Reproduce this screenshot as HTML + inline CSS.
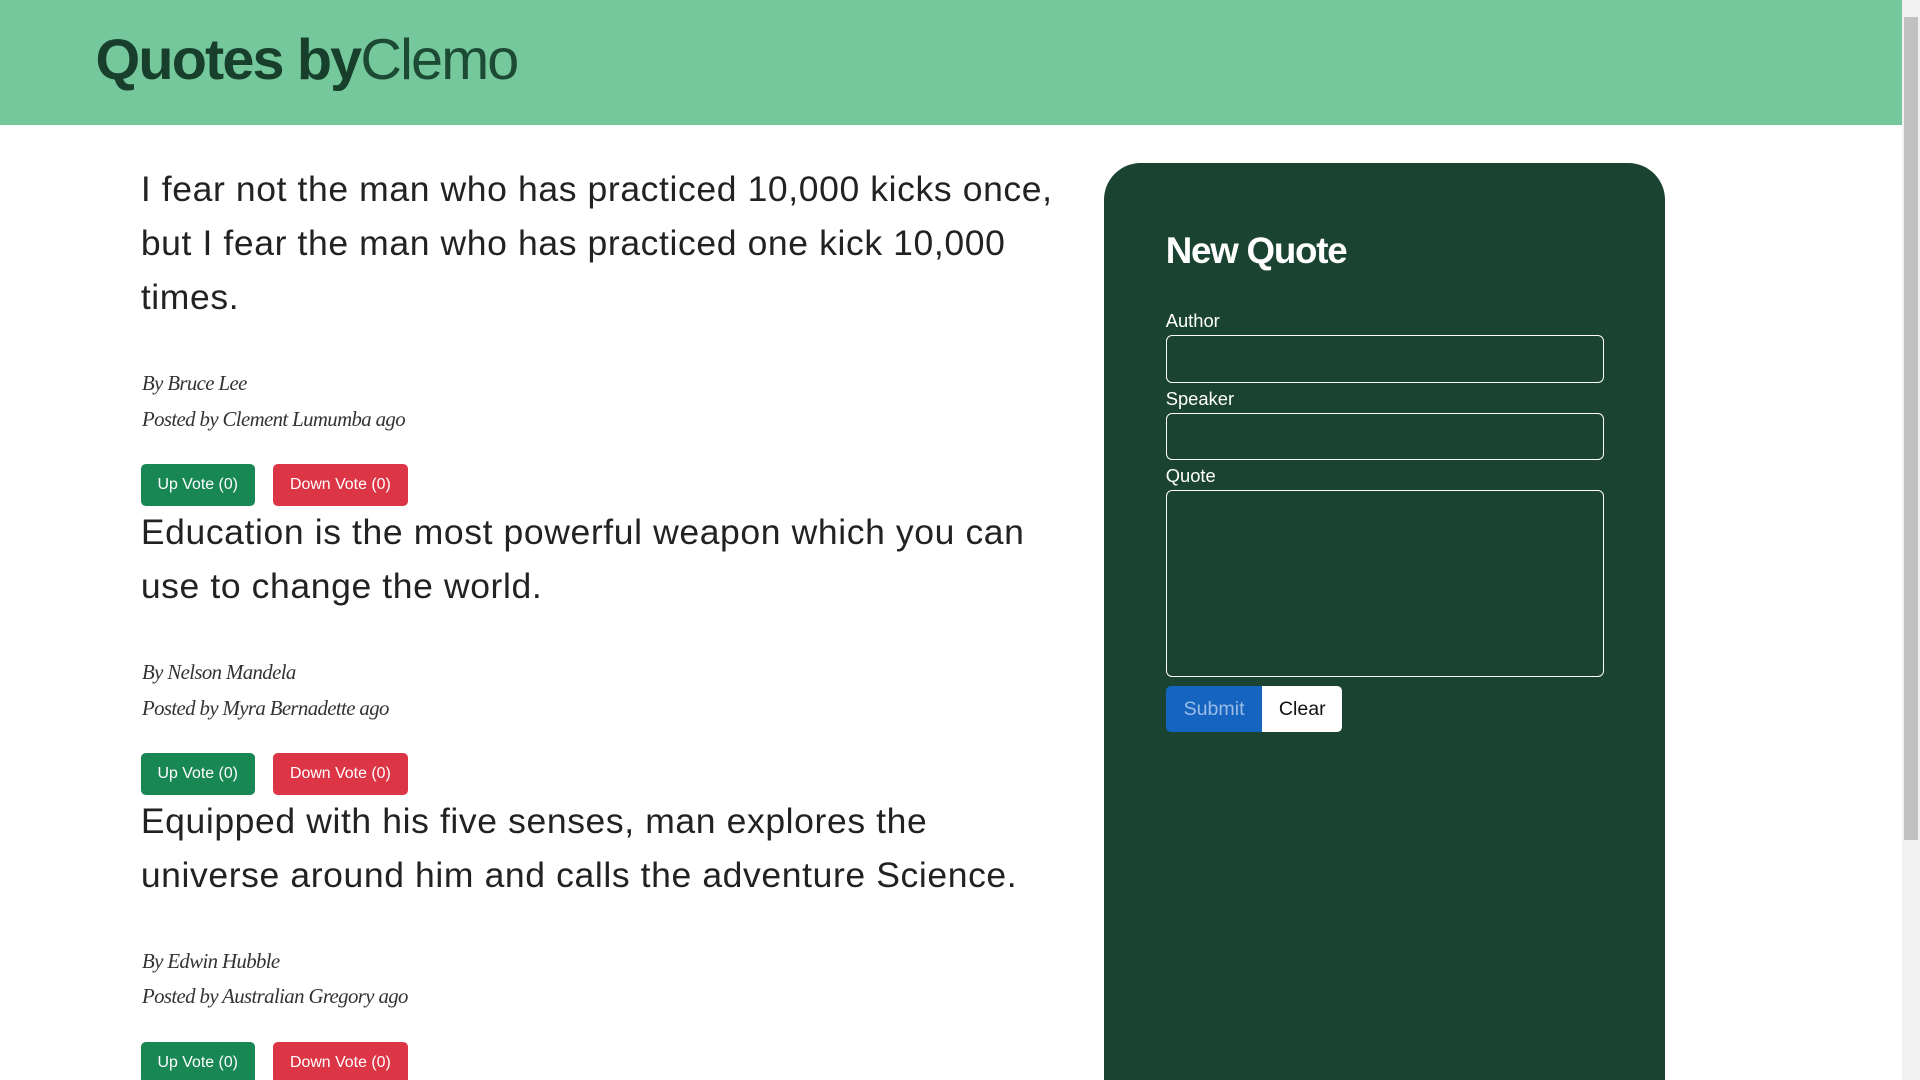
<!DOCTYPE html>
<html><head><meta charset="utf-8"><style>
html{zoom:1.22449;overflow:hidden}
body{margin:0;width:1568px;height:882px;overflow:hidden;background:#fff;font-family:"Liberation Sans",sans-serif;position:relative}
.hdr{position:absolute;left:0;top:0;width:1553px;height:102px;background:#75c89c}
.hdr h1{position:absolute;left:78px;top:20px;margin:0;font-size:47px;letter-spacing:-1.5px;color:#173f2c;font-weight:bold;line-height:60px}
.hdr h1 span{font-weight:normal;color:#1d4a34}
.sb{position:absolute;left:1553px;top:0;width:15px;height:882px;background:#f1f1f1}
.sb div{position:absolute;left:2px;top:14px;width:11px;height:672px;background:#c1c1c1}
.q{position:absolute;left:115px;width:760px;font-size:29px;line-height:44px;color:#222;letter-spacing:.5px}
.a{position:absolute;left:116px;font-family:"Liberation Serif",serif;font-style:italic;font-size:17px;color:#333;letter-spacing:-.5px}
.b{position:absolute;height:34px;border-radius:4px;color:#fff;font-size:13px;line-height:34px;text-align:center}
.up{left:115px;width:93px;background:#198754}
.dn{left:223px;width:110px;background:#dc3545}
.panel{position:absolute;left:902px;top:133px;width:458px;height:760px;background:#1b4332;border-radius:30px 30px 0 0}
.panel *{position:absolute}
.t{left:50px;top:55px;color:#fff;font-size:30px;font-weight:bold;letter-spacing:-1px}
.l{left:50px;color:#fff;font-size:15px}
.in{left:50px;width:356px;border:1px solid #fff;border-radius:5px}
</style></head><body>
<div class="hdr"><h1>Quotes by<span>Clemo</span></h1></div>
<div class="sb"><div></div></div>
<div class="q" style="top:133px">I fear not the man who has practiced 10,000 kicks once, but I fear the man who has practiced one kick 10,000 times.</div>
<div class="a" style="top:303px">By Bruce Lee</div>
<div class="a" style="top:332px">Posted by Clement Lumumba ago</div>
<div class="b up" style="top:379px">Up Vote (0)</div><div class="b dn" style="top:379px">Down Vote (0)</div>
<div class="q" style="top:413px">Education is the most powerful weapon which you can use to change the world.</div>
<div class="a" style="top:539px">By Nelson Mandela</div>
<div class="a" style="top:568px">Posted by Myra Bernadette ago</div>
<div class="b up" style="top:615px">Up Vote (0)</div><div class="b dn" style="top:615px">Down Vote (0)</div>
<div class="q" style="top:649px">Equipped with his five senses, man explores the universe around him and calls the adventure Science.</div>
<div class="a" style="top:775px">By Edwin Hubble</div>
<div class="a" style="top:804px">Posted by Australian Gregory ago</div>
<div class="b up" style="top:851px">Up Vote (0)</div><div class="b dn" style="top:851px">Down Vote (0)</div>
<div class="panel">
<div class="t">New Quote</div>
<div class="l" style="top:120px">Author</div>
<div class="in" style="top:141px;height:37px"></div>
<div class="l" style="top:184px">Speaker</div>
<div class="in" style="top:204px;height:37px"></div>
<div class="l" style="top:247px">Quote</div>
<div class="in" style="top:267px;height:151px"></div>
<div style="left:50px;top:427px;width:79px;height:38px;background:#1565c0;border-radius:4px 0 0 4px;color:#9bbbe8;font-size:16px;line-height:38px;text-align:center">Submit</div>
<div style="left:129px;top:427px;width:65px;height:38px;background:#fff;border-radius:0 4px 4px 0;color:#111;font-size:16px;line-height:38px;text-align:center">Clear</div>
</div>
</body></html>
